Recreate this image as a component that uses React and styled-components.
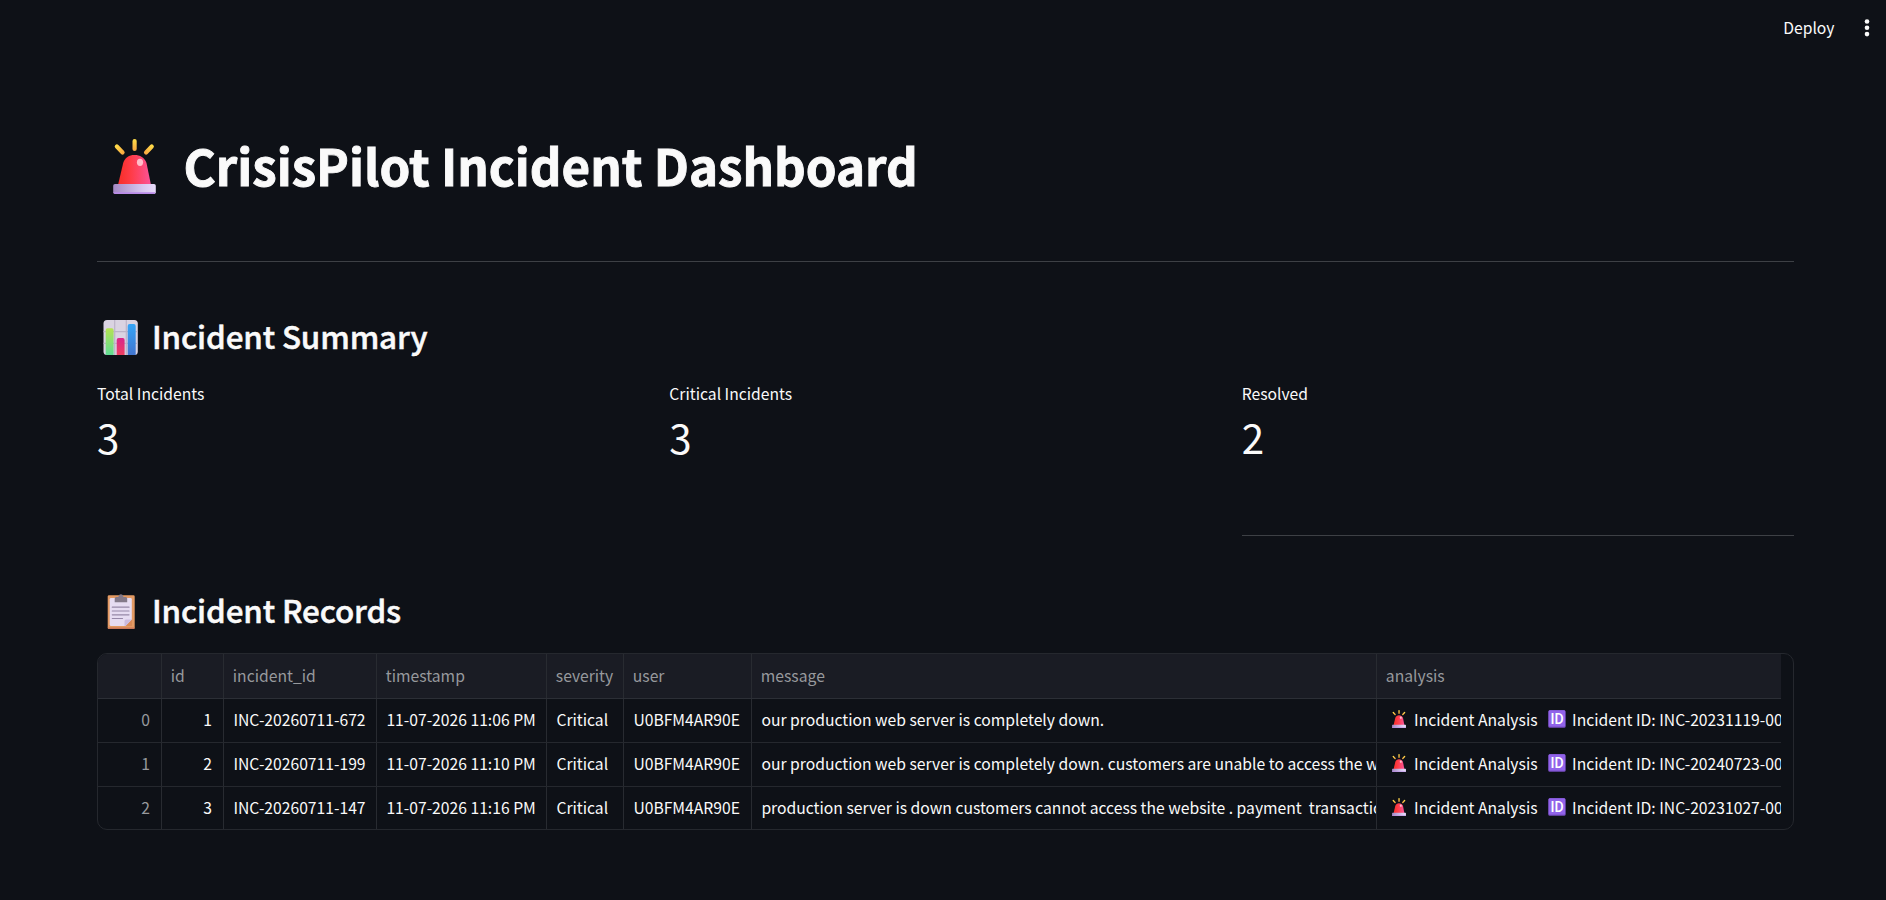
import React from "react";
import styled, { createGlobalStyle } from "styled-components";

const GlobalStyle = createGlobalStyle`
  * {
    box-sizing: border-box;
  }

  body {
    margin: 0;
    background-color: #0e1117;
    color: #fafafa;
    font-family: "Noto Sans CJK SC", "Open Sans", sans-serif;
  }
`;

const Page = styled.div`
  height: 900px;
  overflow: hidden;
`;

const Toolbar = styled.header`
  display: flex;
  justify-content: flex-end;
  align-items: center;
  height: 56px;
  padding-right: 16px;
`;

const DeployButton = styled.button`
  border: none;
  padding: 0;
  margin-right: 29.5px;
  background: none;
  color: #fafafa;
  font-family: inherit;
  font-size: 15.7px;
  line-height: 28px;
  cursor: pointer;
`;

const MenuButton = styled.button`
  display: flex;
  border: none;
  padding: 0;
  background: none;
  cursor: pointer;
`;

const Main = styled.main`
  padding: 75px 92px 0 97px;
`;

const Title = styled.h1`
  display: flex;
  height: 67px;
  margin: 0;
  padding-left: 16px;
  font-size: 49.3px;
  font-weight: 700;
  line-height: 67px;
  white-space: nowrap;
  -webkit-text-stroke: 0.9px #fafafa;

  svg {
    margin: 8px 27.5px 0 0;
  }
`;

const Subtitle = styled.h3`
  display: flex;
  height: 42px;
  margin: 54px 0 0;
  padding-left: 6px;
  font-size: 31.4px;
  font-weight: 500;
  letter-spacing: -0.14px;
  line-height: 40px;
  white-space: nowrap;
  -webkit-text-stroke: 0.5px #fafafa;

  svg {
    margin: 4px 14px 0 0;
  }
`;

const Divider = styled.hr`
  height: 1px;
  margin: ${({ $top }) => $top} 0 0;
  border: none;
  background-color: #3d4045;
`;

const Metrics = styled.section`
  display: grid;
  grid-template-columns: repeat(3, 1fr);
  gap: 20px;
  margin-top: 22px;
`;

const MetricLabel = styled.div`
  font-size: 15.7px;
  line-height: 28px;
`;

const MetricValue = styled.div`
  margin-top: 1px;
  font-size: 40.3px;
  line-height: 56px;
`;

const Table = styled.div`
  height: 177px;
  margin-top: 21px;
  padding-right: 12px;
  border: 1px solid #25282e;
  border-radius: 10px;
  overflow: hidden;
`;

const Row = styled.div`
  display: grid;
  grid-template-columns: 64px 62px 153px 170px 77px 128px 625px 1fr;
  height: ${({ $head }) => ($head ? "45px" : "43.75px")};
  background-color: ${({ $head }) => ($head ? "#1a1c24" : "transparent")};
  border-bottom: 1px solid ${({ $head }) => ($head ? "#2c2f36" : "#25282e")};

  &:last-child {
    border-bottom: none;
  }
`;

const Cell = styled.div`
  display: flex;
  align-items: center;
  justify-content: ${({ $right }) => ($right ? "flex-end" : "flex-start")};
  padding: 0 11px 2px ${({ $muted }) => ($muted ? "8.8px" : "9.4px")};
  border-right: 1px solid #282b31;
  color: ${({ $muted }) => ($muted ? "#97999d" : "#fafafa")};
  font-size: 15.7px;
  white-space: pre;
  overflow: hidden;

  &:last-child {
    border-right: none;
    padding-right: 0;
  }
`;

const Emoji = styled.svg`
  flex: none;
  margin: ${({ $margin }) => $margin || 0};
`;

const Siren = ({ width, height, margin, id }) => (
  <Emoji width={width} height={height} viewBox="0 0 43 55" preserveAspectRatio="none" $margin={margin}>
    <defs>
      <linearGradient id={`${id}-dome`} x1="0" x2="1" y1="0" y2="0">
        <stop offset="0.1" stopColor="#f8312f" />
        <stop offset="0.4" stopColor="#ff3c48" />
        <stop offset="1" stopColor="#fb5499" />
      </linearGradient>
      <linearGradient id={`${id}-base`} x1="0" x2="1" y1="0" y2="0">
        <stop offset="0" stopColor="#a488c4" />
        <stop offset="0.7" stopColor="#d8c8f0" />
        <stop offset="1" stopColor="#e9dcfb" />
      </linearGradient>
      <linearGradient id={`${id}-ray`} x1="0" x2="0" y1="0" y2="1">
        <stop offset="0" stopColor="#ffe04a" />
        <stop offset="1" stopColor="#f9a540" />
      </linearGradient>
    </defs>
    <g fill={`url(#${id}-ray)`}>
      <rect x="19.5" y="0" width="4.2" height="12" rx="2.1" />
      <rect x="4.6" y="4.3" width="4.2" height="12.4" rx="2.1" transform="rotate(-44 6.7 10.5)" />
      <rect x="33.800" y="4.3" width="4.2" height="12.4" rx="2.1" transform="rotate(44 35.9 10.5)" />
    </g>
    <path d="M5 46L10.2 24C12 18.500 16 16 21.500 16S31.500 18.500 33.500 24L38 46Z" fill={`url(#${id}-dome)`} />
    <ellipse cx="27" cy="23.300" rx="3.100" ry="3.600" fill="#ffd3da" opacity="0.85" />
    <rect x="0.200" y="45" width="42.600" height="10" rx="1.800" fill={`url(#${id}-base)`} />
    <path d="M0.500 53.300H42.500Q42.300 55 41 55H2Q0.700 55 0.500 53.300Z" fill="#b98be8" />
  </Emoji>
);

const BarChart = () => (
  <Emoji width="35" height="35" viewBox="0 0 35 35">
    <defs>
      <linearGradient id="bar-green" x1="0" x2="0" y1="0" y2="1">
        <stop offset="0" stopColor="#b5e352" />
        <stop offset="1" stopColor="#5fdc94" />
      </linearGradient>
      <linearGradient id="bar-red" x1="0" x2="0" y1="0" y2="1">
        <stop offset="0" stopColor="#d9268c" />
        <stop offset="1" stopColor="#ee3f60" />
      </linearGradient>
      <linearGradient id="bar-blue" x1="0" x2="0" y1="0" y2="1">
        <stop offset="0" stopColor="#35a5f7" />
        <stop offset="1" stopColor="#4275cf" />
      </linearGradient>
    </defs>
    <rect x="0.500" y="0" width="34.300" height="35" rx="3.500" fill="#dad3e2" />
    <path d="M11.700 0V35M23.300 0V35M0.500 11.700H34.500M0.500 23.300H34.500" stroke="#bcb3c8" strokeWidth="1.200" />
    <path d="M2.700 35V10Q2.700 8.200 4.500 8.200H8.800Q10.600 8.200 10.600 10V35Z" fill="url(#bar-green)" />
    <path d="M13.700 35V20Q13.700 18 15.600 18H19.800Q21.600 18 21.600 20V35Z" fill="url(#bar-red)" />
    <path d="M24.700 35V6Q24.700 4 26.600 4H30.900Q32.700 4 32.700 6V35Z" fill="url(#bar-blue)" />
  </Emoji>
);

const Clipboard = () => (
  <Emoji width="35" height="35" viewBox="0 0 35 35">
    <rect x="4.700" y="1.200" width="27" height="33.800" rx="1.300" fill="#e39a63" />
    <path d="M4.700 33.500H31.700Q31.700 35 30.200 35H6.200Q4.700 35 4.700 33.500Z" fill="#c9775a" />
    <path d="M8.200 4H27.500Q28.800 4 28.800 5.300V25.500L22.500 32H8.200Q6.700 32 6.700 30.500V5.300Q6.700 4 8.200 4Z" fill="#e6dcf2" />
    <path d="M22.500 32L29 25.500V32Z" fill="#d98b58" />
    <path d="M21.500 32V27Q21.500 25.500 23 25.500H28.800L22.500 32Z" fill="#cbbbe0" />
    <path d="M9.300 13.200H26M9.300 17H26M9.300 20.800H26M9.300 24.500H19.500" stroke="#9688a8" strokeWidth="1.200" strokeLinecap="round" />
    <path d="M11.700 8.200V4.500Q11.700 3 13.200 3H15.400Q15.700 0.200 17.900 0.200T20.400 3H22.700Q24.200 3 24.200 4.500V8.200Z" fill="#837989" />
  </Emoji>
);

const IdBadge = () => (
  <Emoji width="18" height="18" viewBox="0 0 18 18" $margin="0 6.3px 0 10.2px">
    <rect x="0.300" y="0.300" width="17.300" height="17.400" rx="1.500" fill="#7a4fc6" />
    <rect x="0.700" y="0.300" width="16.500" height="16.200" rx="1.300" fill="#9163ea" />
    <text x="9" y="14" textAnchor="middle" fontFamily="Roboto, sans-serif" fontSize="14" fontWeight="500" fill="#fff">
      ID
    </text>
  </Emoji>
);

const metrics = [
  { label: "Total Incidents", value: 3 },
  { label: "Critical Incidents", value: 3 },
  { label: "Resolved", value: 2 },
];

const columns = ["", "id", "incident_id", "timestamp", "severity", "user", "message", "analysis"];

const records = [
  {
    id: 1,
    incidentId: "INC-20260711-672",
    timestamp: "11-07-2026 11:06 PM",
    message: "our production web server is completely down.",
    analysisId: "INC-20231119-00",
  },
  {
    id: 2,
    incidentId: "INC-20260711-199",
    timestamp: "11-07-2026 11:10 PM",
    message: "our production web server is completely down. customers are unable to access the w",
    analysisId: "INC-20240723-00",
  },
  {
    id: 3,
    incidentId: "INC-20260711-147",
    timestamp: "11-07-2026 11:16 PM",
    message: "production server is down customers cannot access the website . payment  transactio",
    analysisId: "INC-20231027-00",
  },
];

const App = () => (
  <Page>
    <GlobalStyle />
    <Toolbar>
      <DeployButton type="button">Deploy</DeployButton>
      <MenuButton type="button" aria-label="Menu">
        <svg width="6" height="20" viewBox="0 0 6 20" fill="#fafafa">
          <circle cx="3" cy="3.500" r="2.300" />
          <circle cx="3" cy="9.800" r="2.300" />
          <circle cx="3" cy="16.100" r="2.300" />
        </svg>
      </MenuButton>
    </Toolbar>
    <Main>
      <Title>
        <Siren id="title" width="43" height="55" />
        CrisisPilot Incident Dashboard
      </Title>
      <Divider $top="63px" />
      <Subtitle>
        <BarChart />
        Incident Summary
      </Subtitle>
      <Metrics>
        {metrics.map(({ label, value }) => (
          <div key={label}>
            <MetricLabel>{label}</MetricLabel>
            <MetricValue>{value}</MetricValue>
            {label === "Resolved" && <Divider $top="70px" />}
          </div>
        ))}
      </Metrics>
      <Subtitle>
        <Clipboard />
        Incident Records
      </Subtitle>
      <Table>
        <Row $head>
          {columns.map((name) => (
            <Cell key={name} $muted>{name}</Cell>
          ))}
        </Row>
        {records.map((record, index) => (
          <Row key={record.id}>
            <Cell $muted $right>{index}</Cell>
            <Cell $right>{record.id}</Cell>
            <Cell>{record.incidentId}</Cell>
            <Cell>{record.timestamp}</Cell>
            <Cell>Critical</Cell>
            <Cell>U0BFM4AR90E</Cell>
            <Cell>{record.message}</Cell>
            <Cell>
              <Siren id={`row-${index}`} width="14" height="18" margin="0 8.2px 0 5.5px" />
              Incident Analysis
              <IdBadge />
              Incident ID: {record.analysisId}
            </Cell>
          </Row>
        ))}
      </Table>
    </Main>
  </Page>
);

export default App;
